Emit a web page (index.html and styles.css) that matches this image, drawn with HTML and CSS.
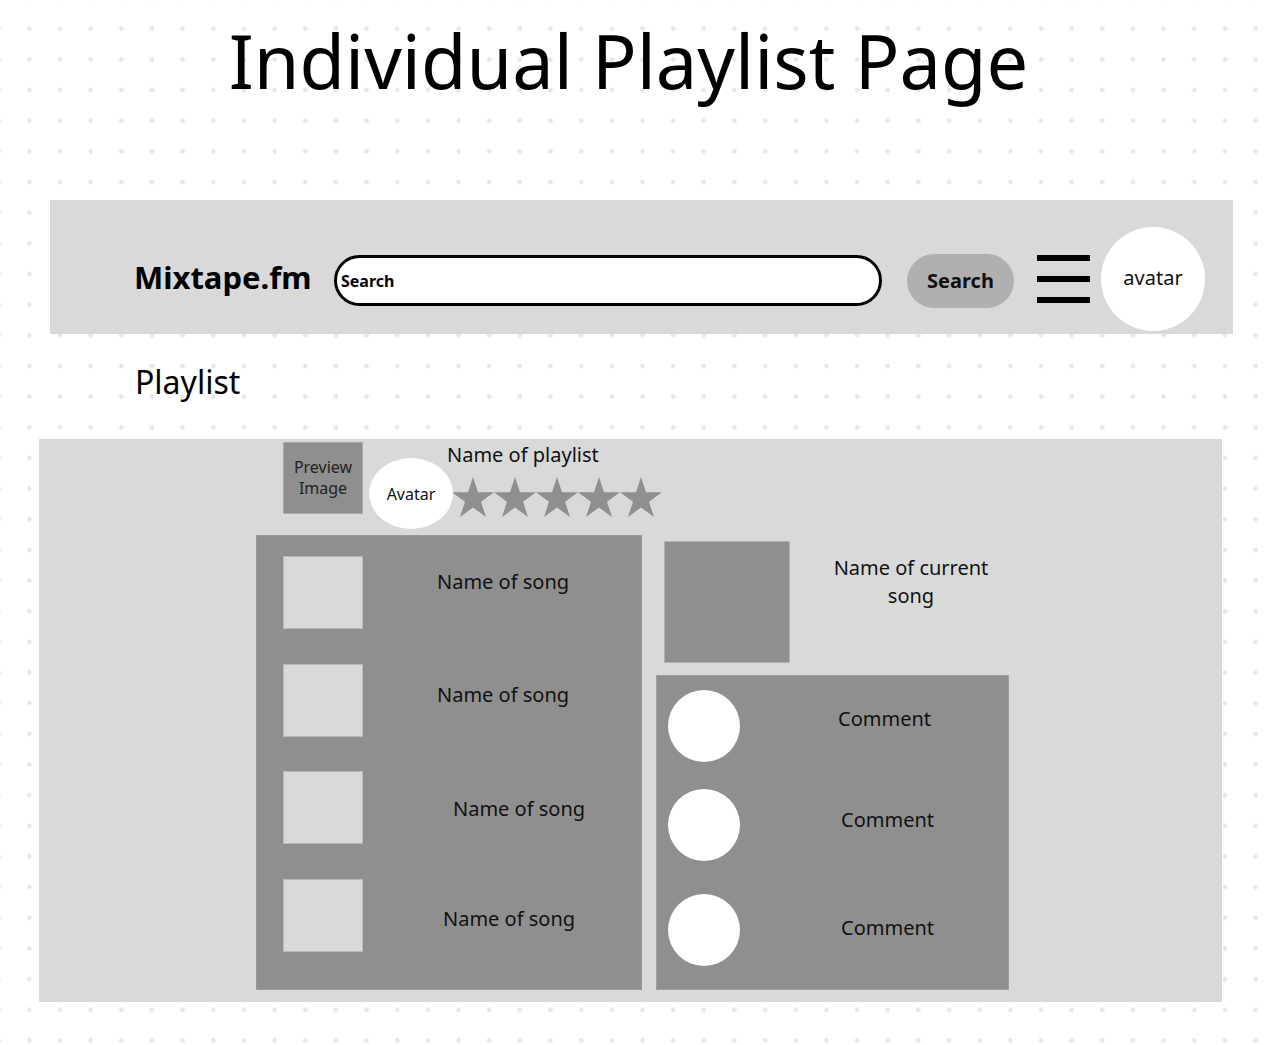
FILE: index.html
```html
<!DOCTYPE html>
<html lang="en">
<head>
<meta charset="utf-8">
<title>Individual Playlist Page</title>
<link rel="stylesheet" href="styles.css">
</head>
<body>
<div class="page">
  <h1 class="page-title">Individual Playlist Page</h1>

  <header class="topbar">
    <div class="logo">Mixtape.fm</div>
    <div class="search-field">Search</div>
    <button class="search-btn" type="button">Search</button>
    <div class="hamburger"><span></span><span></span><span></span></div>
    <div class="avatar-lg">avatar</div>
  </header>

  <h2 class="section-title">Playlist</h2>

  <main class="panel">
    <div class="info-row">
      <div class="preview">Preview<br>Image</div>
      <div class="avatar-sm">Avatar</div>
      <div class="info-text">
        <div class="playlist-name">Name of playlist</div>
        <svg class="stars" width="210" height="42" viewBox="0 0 210 42" aria-hidden="true">
          <defs>
            <polygon id="star" points="21,0 25.96,15.26 42,15.26 29.02,24.69 33.98,39.94 21,30.51 8.02,39.94 12.98,24.69 0,15.26 16.04,15.26"/>
          </defs>
          <use href="#star" x="0" y="1"/>
          <use href="#star" x="42" y="1"/>
          <use href="#star" x="84" y="1"/>
          <use href="#star" x="126" y="1"/>
          <use href="#star" x="168" y="1"/>
        </svg>
      </div>
    </div>

    <div class="content-row">
      <section class="songs">
        <div class="song r1"><div class="thumb"></div><div class="song-name">Name of song</div></div>
        <div class="song r2"><div class="thumb"></div><div class="song-name">Name of song</div></div>
        <div class="song r3"><div class="thumb"></div><div class="song-name">Name of song</div></div>
        <div class="song r4"><div class="thumb"></div><div class="song-name">Name of song</div></div>
      </section>

      <div class="right-col">
        <div class="current">
          <div class="cover"></div>
          <div class="current-name">Name of current<br>song</div>
        </div>
        <section class="comments">
          <div class="comment c1"><div class="c-avatar"></div><div class="c-text">Comment</div></div>
          <div class="comment c2"><div class="c-avatar"></div><div class="c-text">Comment</div></div>
          <div class="comment c3"><div class="c-avatar"></div><div class="c-text">Comment</div></div>
        </section>
      </div>
    </div>
  </main>
</div>
</body>
</html>
```

FILE: styles.css
```css
* { box-sizing: border-box; }

html, body {
  margin: 0;
  padding: 0;
}

body {
  width: 1270px;
  min-height: 1045px;
  background-color: #ffffff;
  background-image: radial-gradient(circle, #e4e7ec 0, #e4e7ec 2px, rgba(255,255,255,0) 2.6px);
  background-size: 30.67px 30.67px;
  background-position: 14px 13.4px;
  font-family: "Noto Sans", "Open Sans", sans-serif;
  color: #111;
  overflow: hidden;
}

.page {
  display: flex;
  flex-direction: column;
  align-items: flex-start;
}

.page-title {
  margin: 17px 0 0 0;
  width: 1257px;
  text-align: center;
  font-size: 74px;
  font-weight: 400;
  line-height: 1.2;
  color: #000;
}

.topbar {
  margin: 94px 0 0 50px;
  width: 1183px;
  height: 134px;
  background: #d9d9d9;
  padding: 27px 0 3px 84px;
  display: flex;
  align-items: center;
}

.logo {
  width: 200px;
  font-size: 31px;
  font-weight: 700;
  color: #000;
  margin-top: -3px;
}

.search-field {
  margin-top: 4px;
  width: 548px;
  height: 51px;
  border: 3px solid #000;
  border-radius: 26px;
  background: #fff;
  padding-left: 4px;
  display: flex;
  align-items: center;
  font-size: 16px;
  font-weight: 700;
  color: #000;
}

.search-btn {
  margin: 4px 0 0 25px;
  width: 107px;
  height: 54px;
  border: none;
  border-radius: 27px;
  background: #b0b0b0;
  font-family: "Noto Sans", "Open Sans", sans-serif;
  font-size: 20px;
  font-weight: 700;
  color: #111;
  padding: 0;
}

.hamburger {
  margin: 0 0 0 23px;
  width: 53px;
  display: flex;
  flex-direction: column;
  gap: 15px;
}

.hamburger span {
  display: block;
  height: 6px;
  background: #000;
}

.avatar-lg {
  margin-left: 11px;
  width: 104px;
  height: 104px;
  border-radius: 50%;
  background: #fff;
  display: flex;
  align-items: center;
  justify-content: center;
  font-size: 20px;
  color: #111;
  padding-bottom: 2px;
}

.section-title {
  margin: 29px 0 0 135px;
  font-size: 32px;
  font-weight: 400;
  line-height: 1.2;
  color: #000;
}

.panel {
  margin: 38px 0 0 39px;
  width: 1183px;
  height: 563px;
  background: #d9d9d9;
  padding: 3px 0 0 217px;
  display: flex;
  flex-direction: column;
}

.info-row {
  height: 93px;
  margin-left: 27px;
  display: flex;
  align-items: flex-start;
}

.preview {
  width: 80px;
  height: 72px;
  background: #8f8f8f;
  border: 1px solid #a9a9a9;
  display: flex;
  align-items: center;
  justify-content: center;
  text-align: center;
  font-size: 16px;
  line-height: 21px;
  color: #222;
}

.avatar-sm {
  position: relative;
  z-index: 1;
  margin: 16px 0 0 6px;
  width: 84px;
  height: 71px;
  border-radius: 50%;
  background: #fff;
  display: flex;
  align-items: center;
  justify-content: center;
  font-size: 16px;
  color: #111;
}

.info-text {
  margin-left: -6px;
  display: flex;
  flex-direction: column;
  align-items: flex-start;
}

.playlist-name {
  margin-top: 1px;
  font-size: 20px;
  line-height: 24px;
}

.stars {
  display: block;
  margin: 9px 0 0 5px;
  fill: #8f8f8f;
}

.content-row {
  display: flex;
  align-items: flex-start;
}

.songs {
  width: 386px;
  height: 455px;
  background: #8f8f8f;
  border: 1px solid #9a9a9a;
  padding: 20px 0 0 26px;
  display: flex;
  flex-direction: column;
  gap: 34.5px;
}

.song {
  display: flex;
  align-items: flex-start;
}

.thumb {
  width: 80px;
  height: 73px;
  background: #d9d9d9;
  border: 1px solid #b9b9b9;
  flex: none;
}

.song-name {
  font-size: 20px;
  line-height: 24px;
}

.r1 .song-name { margin: 14px 0 0 74px; }
.r2 .song-name { margin: 19px 0 0 74px; }
.r3 .song-name { margin: 26px 0 0 90px; }
.r4 .song-name { margin: 28px 0 0 80px; }

.right-col {
  margin-left: 14px;
  width: 353px;
  display: flex;
  flex-direction: column;
}

.current {
  margin: 6px 0 0 8px;
  display: flex;
  align-items: flex-start;
}

.cover {
  width: 126px;
  height: 122px;
  background: #8f8f8f;
  border: 1px solid #b3b3b3;
  flex: none;
}

.current-name {
  margin: 13px 0 0 36px;
  width: 170px;
  text-align: center;
  font-size: 20px;
  line-height: 28px;
}

.comments {
  margin-top: 12px;
  width: 353px;
  height: 315px;
  background: #8f8f8f;
  border: 1px solid #a0a0a0;
  padding: 14px 0 0 11px;
  display: flex;
  flex-direction: column;
}

.comment {
  display: flex;
  align-items: flex-start;
}

.c2 { margin-top: 27px; }
.c3 { margin-top: 33px; }

.c-avatar {
  width: 72px;
  height: 72px;
  border-radius: 50%;
  background: #fff;
  flex: none;
}

.c-text {
  font-size: 20px;
  line-height: 24px;
}

.c1 .c-text { margin: 17px 0 0 98px; }
.c2 .c-text { margin: 19px 0 0 101px; }
.c3 .c-text { margin: 22px 0 0 101px; }
```
